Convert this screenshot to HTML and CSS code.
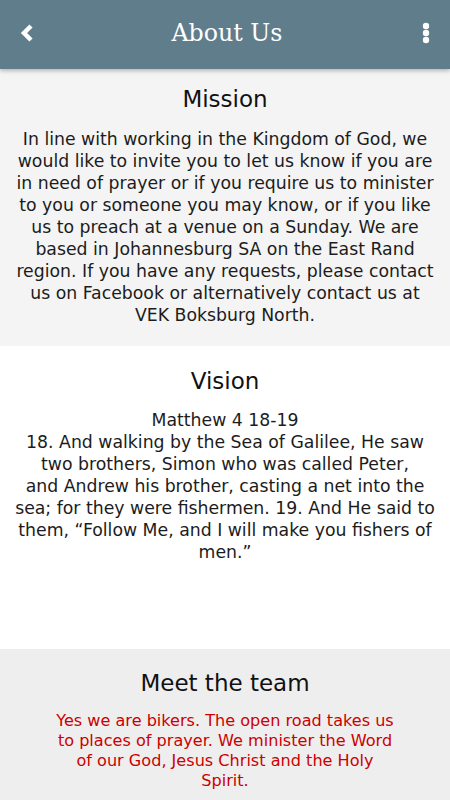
FILE: index.html
```html
<!DOCTYPE html>
<html lang="en">
<head>
    <meta charset="UTF-8">
    <meta name="viewport" content="width=device-width, initial-scale=1.0">
    <title>About Us</title>
    <link rel="stylesheet" href="styles.css">
</head>
<body>
    <div class="toolbar">
        <button class="icon-btn back" aria-label="Back">
            <svg width="16" height="20" viewBox="0 0 16 20">
                <path d="M11 3 L4 10 L11 17" fill="none" stroke="#fff" stroke-width="4.5" stroke-linejoin="miter"/>
            </svg>
        </button>
        <h1>About Us</h1>
        <button class="icon-btn menu" aria-label="More">
            <svg width="8" height="24" viewBox="0 0 8 24">
                <circle cx="4" cy="5" r="3.2" fill="#fff"/>
                <circle cx="4" cy="12" r="3.2" fill="#fff"/>
                <circle cx="4" cy="19" r="3.2" fill="#fff"/>
            </svg>
        </button>
    </div>

    <div class="section mission">
        <h2>Mission</h2>
        <p>In line with working in the Kingdom of God, we<br>
        would like to invite you to let us know if you are<br>
        in need of prayer or if you require us to minister<br>
        to you or someone you may know, or if you like<br>
        us to preach at a venue on a Sunday. We are<br>
        based in Johannesburg SA on the East Rand<br>
        region. If you have any requests, please contact<br>
        us on Facebook or alternatively contact us at<br>
        VEK Boksburg North.</p>
    </div>

    <div class="section vision">
        <h2>Vision</h2>
        <p>Matthew 4 18-19<br>
        18. And walking by the Sea of Galilee, He saw<br>
        two brothers, Simon who was called Peter,<br>
        and Andrew his brother, casting a net into the<br>
        sea; for they were fishermen. 19. And He said to<br>
        them, “Follow Me, and I will make you fishers of<br>
        men.”</p>
    </div>

    <div class="section team">
        <h2>Meet the team</h2>
        <p>Yes we are bikers. The open road takes us to places of prayer. We minister the Word of our God, Jesus Christ and the Holy Spirit.</p>
    </div>
</body>
</html>
```

FILE: styles.css
```css
body {
    font-family: "DejaVu Sans", sans-serif;
    margin: 0;
    padding: 0;
    background-color: #ffffff;
    color: #1c1c1c;
    text-align: center;
}
.toolbar {
    height: 69px;
    background-color: #607d8b;
    display: flex;
    align-items: center;
    justify-content: space-between;
    padding: 0 12px 0 16px;
    box-shadow: 0 2px 4px rgba(0, 0, 0, 0.25);
    position: relative;
}
.toolbar h1 {
    margin: 0;
    font-family: "DejaVu Serif", serif;
    font-weight: normal;
    font-size: 23.7px;
    color: white;
    padding-bottom: 3px;
}
.icon-btn {
    background: none;
    border: none;
    padding: 0;
    width: 24px;
    height: 30px;
    display: flex;
    align-items: center;
    justify-content: center;
    margin-bottom: 3px;
}
.section {
    padding: 15px 10px 20px;
}
.section h2 {
    margin: 0 0 14px;
    font-size: 23px;
    font-weight: normal;
    line-height: 30px;
    color: #111;
}
.section p {
    margin: 0;
    font-size: 17.3px;
    line-height: 22px;
}
.mission {
    background-color: #f4f4f4;
}
.vision {
    background-color: #ffffff;
    padding-top: 20px;
    min-height: 263px;
}
.vision h2 {
    margin-bottom: 13px;
}
.team {
    background-color: #eeeeee;
    padding: 19px 53px 20px;
}
.team h2 {
    margin-bottom: 13px;
}
.team p {
    color: #cc0000;
    font-size: 16.1px;
    line-height: 20px;
}
```
